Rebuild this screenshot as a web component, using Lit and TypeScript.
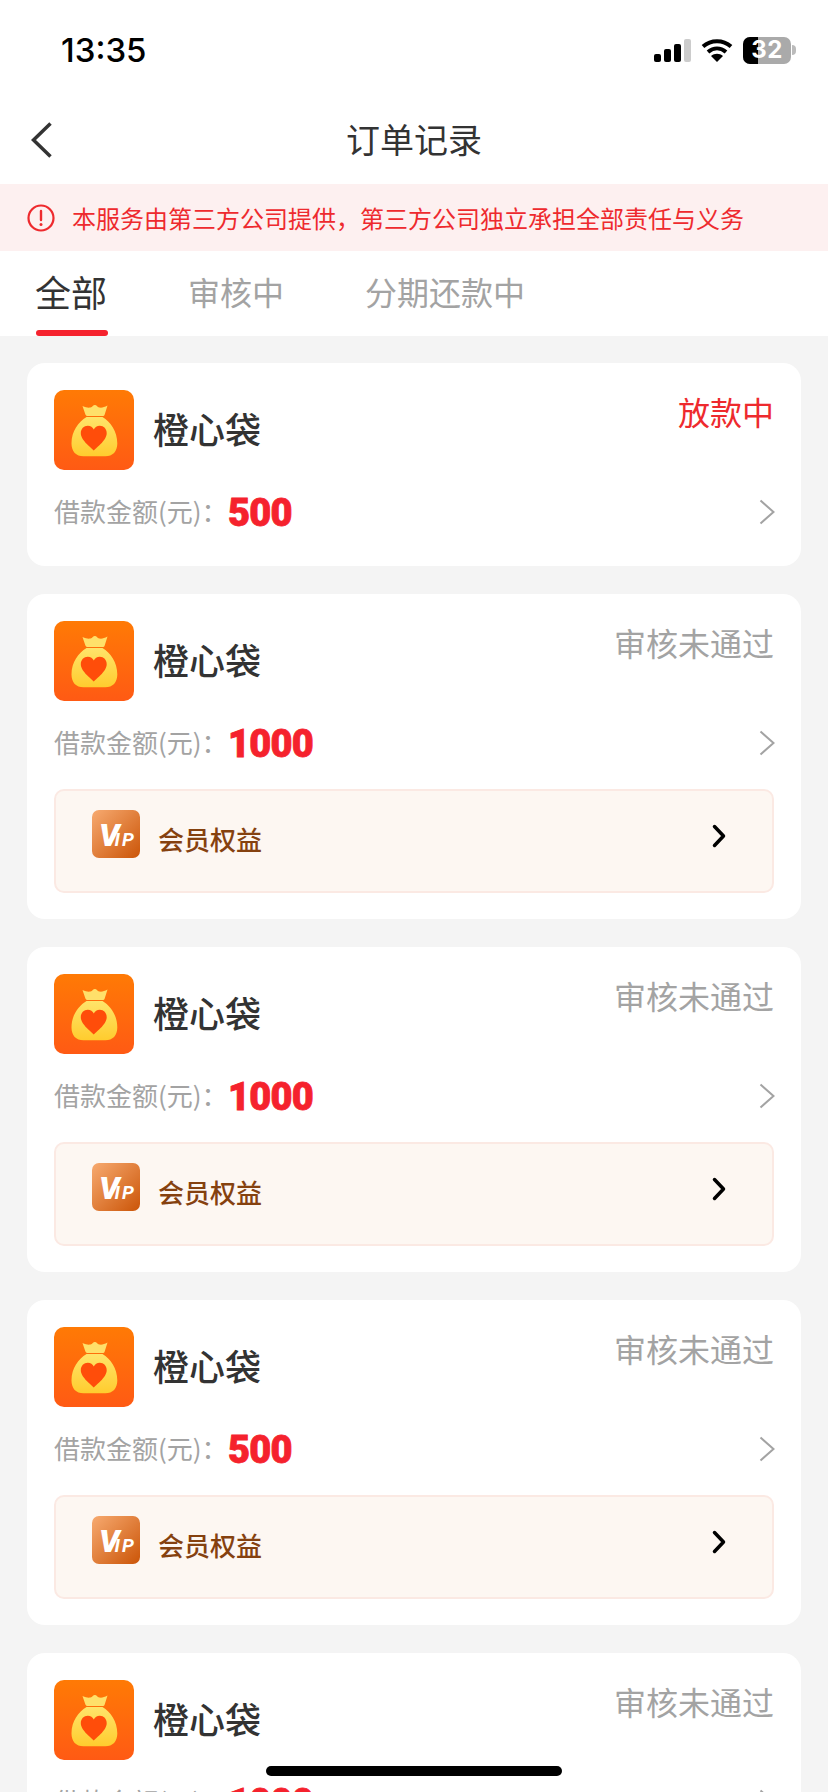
import { LitElement, css, html, nothing } from "lit";
import { customElement, property } from "lit/decorators.js";

@customElement("order-card")
export class OrderCard extends LitElement {
  @property() status = "";
  @property() amount = "";
  @property({ type: Boolean }) active = false;
  @property({ type: Boolean }) vip = false;

  renderBag() {
    return html`
      <svg class="bag" viewBox="0 0 80 80" aria-hidden="true">
        <defs>
          <linearGradient id="bg" x1="0" y1="0" x2="0" y2="1">
            <stop offset="0" stop-color="#ff7a05" />
            <stop offset="1" stop-color="#ff5a14" />
          </linearGradient>
          <linearGradient id="gold" x1="0" y1="0" x2="0" y2="1">
            <stop offset="0" stop-color="#ffe46a" />
            <stop offset="1" stop-color="#ffcc2e" />
          </linearGradient>
        </defs>
        <rect width="80" height="80" rx="10" fill="url(#bg)" />
        <path
          d="M28.500 16c3.200 1.400 5.500 1.900 8 1.500 2-.4 2.600-2.500 4.400-2.500 1.700 0 2.400 2.100 4.300 2.500 2.500.4 5-.1 8.300-1.900
             l-2.800 9c-.3 1-1.100 1.500-2 1.500H33.500c-1 0-1.800-.6-2.100-1.500z"
          fill="#ffe06a"
        />
        <path
          d="M32.500 27h16c8 5 14.800 14 14.800 26.500 0 8-4.500 12.800-12 12.800H29.500c-7.500 0-12-4.800-12-12.800 0-12.500 7-21.500 15-26.500z"
          fill="url(#gold)"
        />
        <path
          d="M39.800 60.500c-1-1.700-13-9.700-13-17.300 0-4.400 3.100-7.400 7-7.400 2.800 0 4.900 1.500 6 3.700 1.100-2.200 3.200-3.700 6-3.700 3.900 0 6.900 3 6.900 7.400 0 7.600-11.900 15.600-12.900 17.300z"
          fill="#ff4d0a"
        />
      </svg>
    `;
  }

  renderVip() {
    return html`
      <div class="vip">
        <svg class="vip-icon" viewBox="0 0 48 48" aria-hidden="true">
          <defs>
            <linearGradient id="vipbg" x1="0" y1="0" x2="1" y2="1">
              <stop offset="0" stop-color="#f7aa70" />
              <stop offset="1" stop-color="#cb5508" />
            </linearGradient>
          </defs>
          <rect width="48" height="48" rx="7" fill="url(#vipbg)" />
          <text x="7" y="36" class="v">V<tspan class="ip" dx="-5">IP</tspan></text>
        </svg>
        <span class="vip-text">会员权益</span>
        <svg class="vip-arrow" viewBox="0 0 14 24" aria-hidden="true">
          <path d="M2.500 2.500 11.500 12l-9 9.500" />
        </svg>
      </div>
    `;
  }

  override render() {
    return html`
      <div class="card">
        <div class="head">
          ${this.renderBag()}
          <span class="name">橙心袋</span>
          <span class="status ${this.active ? "active" : ""}">${this.status}</span>
        </div>
        <div class="row">
          <span class="label">借款金额(元)：</span>
          <span class="amount">${this.amount}</span>
          <svg class="arrow" viewBox="0 0 16 26" aria-hidden="true">
            <path d="M1.500 1.500 14.500 13l-13 11.500" />
          </svg>
        </div>
        ${this.vip ? this.renderVip() : nothing}
      </div>
    `;
  }

  static override styles = css`
    :host { display: block; }
    .card {
      background: #fff;
      border-radius: 18px;
      padding: 27px 27px 30px;
      font-family: "Noto Sans CJK SC", "Liberation Sans", sans-serif;
    }

    .head { display: flex; align-items: center; height: 80px; }
    .bag { width: 80px; height: 80px; flex: 0 0 auto; }
    .name { margin: -5px 0 0 19px; font-size: 36px; font-weight: 500; color: #333; line-height: 1; }
    .status { margin: -2px 0 0 auto; align-self: flex-start; font-size: 32px; line-height: 46px; color: #a3a3a3; }
    .status.active { color: #ee2a2e; }

    .row { display: flex; align-items: center; height: 46px; margin-top: 20px; }
    .label { width: 174px; margin-top: -5px; font-size: 26px; color: #a3a3a3; white-space: nowrap; }
    .amount {
      font-family: Roboto, "Liberation Sans", sans-serif;
      font-weight: 900; font-size: 38px; letter-spacing: -0.800px;
      -webkit-text-stroke: 0.8px #f5222d;
      color: #f5222d; line-height: 1;
    }
    .arrow { width: 16px; height: 26px; margin: -2px -1px 0 auto; fill: none; stroke: #a3a3a3; stroke-width: 2; }

    .vip {
      display: flex; align-items: center;
      height: 104px; box-sizing: border-box;
      margin-top: 22px; margin-bottom: -4px;
      padding: 0 46px 0 36px;
      background: #fdf7f2;
      border: 2px solid #fbe9e3;
      border-radius: 10px;
    }
    .vip-icon { width: 48px; height: 48px; margin-bottom: 14px; flex: 0 0 auto; }
    .vip-icon .v { font: italic 900 32px Roboto, sans-serif; fill: #fff; }
    .vip-icon .ip { font: italic 700 19px Roboto, sans-serif; letter-spacing: 2px; fill: #fff; }
    .vip-text { margin: -6px 0 0 18px; font-size: 26px; font-weight: 500; color: #85410f; }
    .vip-arrow { width: 14px; height: 24px; margin-left: auto; margin-bottom: 10px; fill: none; stroke: #000; stroke-width: 3.500; stroke-linecap: round; stroke-linejoin: round; }
  `;
}

@customElement("app-root")
export class AppRoot extends LitElement {
  override render() {
    return html`
      <div class="status-bar">
        <span class="time">13:35</span>
        <div class="indicators">
          <svg class="signal" viewBox="0 0 37 23" aria-hidden="true">
            <rect x="0" y="15" width="7" height="8" rx="2" fill="#000" />
            <rect x="10" y="10" width="7" height="13" rx="2" fill="#000" />
            <rect x="20" y="5" width="7" height="18" rx="2" fill="#000" />
            <rect x="30" y="0" width="7" height="23" rx="2" fill="#ccc" />
          </svg>
          <svg class="wifi" viewBox="0 0 32 24" aria-hidden="true">
            <path d="M2 8.500C10 1.500 22 1.500 30 8.500M7 14c5.500-4.600 12.500-4.600 18 0" fill="none" stroke="#000" stroke-width="4" />
            <path d="M16 24l-6-6c3.500-3 8.500-3 12 0z" fill="#000" />
          </svg>
          <div class="battery"><span class="level"></span><span class="pct">32</span></div>
          <span class="cap"></span>
        </div>
      </div>

      <div class="nav">
        <svg class="back" viewBox="0 0 22 36" aria-hidden="true">
          <path d="M19.500 1.500 2.500 18l17 16.500" />
        </svg>
        <span class="title">订单记录</span>
      </div>

      <div class="notice">
        <svg class="alert" viewBox="0 0 28 28" aria-hidden="true">
          <circle cx="14" cy="14" r="12.500" fill="none" stroke="#ee2a2e" stroke-width="2.200" />
          <path d="M14 7v9" stroke="#ee2a2e" stroke-width="2.400" stroke-linecap="round" />
          <circle cx="14" cy="20.500" r="1.500" fill="#ee2a2e" />
        </svg>
        <span>本服务由第三方公司提供，第三方公司独立承担全部责任与义务</span>
      </div>

      <div class="tabs">
        <span class="tab on">全部</span>
        <span class="tab">审核中</span>
        <span class="tab">分期还款中</span>
      </div>

      <div class="list">
        <order-card status="放款中" amount="500" active></order-card>
        <order-card status="审核未通过" amount="1000" vip></order-card>
        <order-card status="审核未通过" amount="1000" vip></order-card>
        <order-card status="审核未通过" amount="500" vip></order-card>
        <order-card status="审核未通过" amount="1000" vip></order-card>
      </div>

      <div class="home"></div>
    `;
  }

  static override styles = css`
    :host {
      display: block; position: relative;
      width: 828px; height: 1792px; overflow: hidden;
      background: #f4f4f4;
      font-family: "Noto Sans CJK SC", "Liberation Sans", sans-serif;
    }

    .status-bar {
      display: flex; align-items: center; justify-content: space-between;
      height: 100px; box-sizing: border-box;
      padding: 0 32px 0 61px;
      background: #fff;
    }
    .time { font: 500 33px Inter, "Liberation Sans", sans-serif; color: #000; }
    .indicators { display: flex; align-items: center; }
    .signal { width: 37px; height: 23px; }
    .wifi { width: 32px; height: 24px; margin-left: 10px; }
    .battery {
      position: relative; overflow: hidden;
      display: flex; align-items: center; justify-content: center;
      width: 48px; height: 27px; margin-left: 10px;
      border-radius: 7px; background: #aaa;
    }
    .level { position: absolute; left: 0; top: 0; bottom: 0; width: 15px; background: #000; }
    .pct { position: relative; font: 700 24px Inter, "Liberation Sans", sans-serif; color: #fff; line-height: 1; letter-spacing: 0.500px; }
    .cap { width: 4px; height: 10px; margin-left: 1px; background: #bbb; border-radius: 0 4px 4px 0; }

    .nav {
      display: flex; align-items: center; justify-content: center;
      position: relative;
      height: 84px; background: #fff;
    }
    .back {
      position: absolute; left: 31px; top: 22px;
      width: 22px; height: 36px;
      fill: none; stroke: #333; stroke-width: 3.500;
    }
    .title { font-size: 34px; color: #333; line-height: 1; margin-top: -7px; }

    .notice {
      display: flex; align-items: center;
      height: 67px; box-sizing: border-box;
      padding-left: 27px;
      background: #fdf0f0;
      color: #ee2a2e; font-size: 24px;
    }
    .alert { width: 28px; height: 28px; margin-right: 17px; flex: 0 0 auto; }

    .tabs {
      display: flex; gap: 81px;
      height: 85px; box-sizing: border-box;
      padding-left: 35px;
      background: #fff;
    }
    .tab { position: relative; font-size: 32px; color: #a3a3a3; line-height: 80px; }
    .tab.on { font-size: 36px; color: #333; }
    .tab.on::after {
      content: ""; position: absolute; left: 1px; top: 79px;
      width: 72px; height: 6px;
      border-radius: 3px; background: #f5222d;
    }

    .list {
      display: flex; flex-direction: column; gap: 28px;
      padding: 27px 27px 0;
    }

    .home {
      position: absolute; left: 266px; top: 1766px;
      width: 296px; height: 10px;
      border-radius: 5px; background: #000;
    }
  `;
}
